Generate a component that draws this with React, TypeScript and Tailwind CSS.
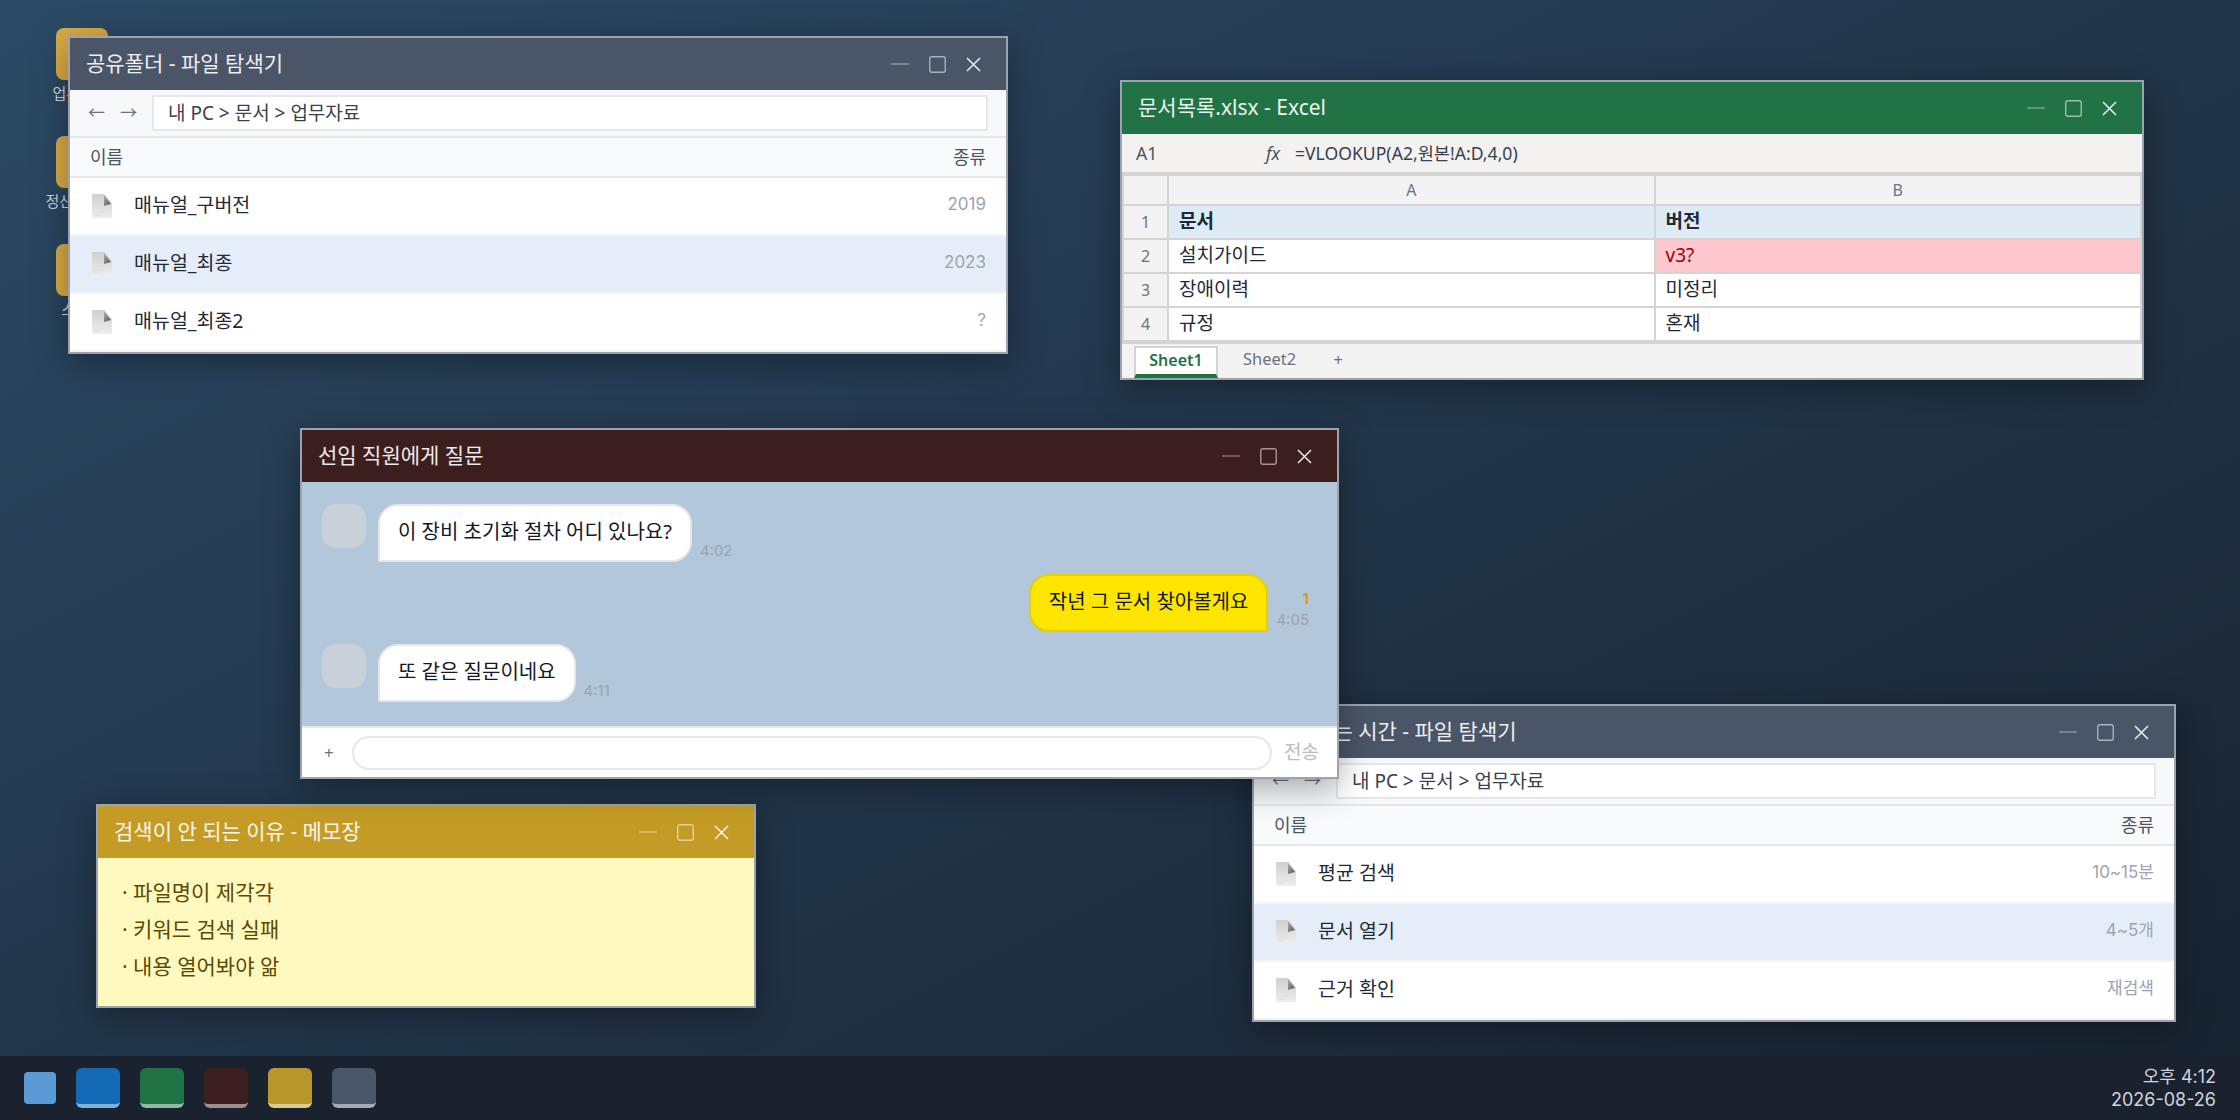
import React from 'react'

const FONT = '[font-family:"Noto_Sans","Noto_Sans_CJK_JP",sans-serif]'
// digits in the list columns, timestamps and clock are proportional
const DIGITS = '[font-family:Inter,"Noto_Sans_CJK_JP",sans-serif]'

// window buttons drawn the same on every title bar
const WinControls = () => (
  <div className="flex items-center gap-[20px] opacity-90">
    <svg width="18" height="18" viewBox="0 0 18 18" fill="none" className="stroke-white/50">
      <path d="M0 9h18" strokeWidth="1.2" />
    </svg>
    <svg width="17" height="17" viewBox="0 0 17 17" fill="none" className="stroke-white/60">
      <rect x="0.75" y="0.75" width="15.5" height="15.5" rx="2" strokeWidth="1.4" />
    </svg>
    <svg width="15" height="15" viewBox="0 0 15 15" fill="none" className="stroke-white">
      <path d="M1 1l13 13M14 1L1 14" strokeWidth="1.5" />
    </svg>
  </div>
)

const TitleBar = ({ title, color }: { title: string; color: string }) => (
  <div className={`h-[52px] shrink-0 flex items-center justify-between pl-[16px] pr-[25px] ${color}`}>
    <span className="text-[21px] text-white/90 whitespace-nowrap">{title}</span>
    <WinControls />
  </div>
)

const FileIcon = () => (
  <svg width="20" height="24" viewBox="0 0 20 24" className="shrink-0">
    <defs>
      <linearGradient id="docBody" x1="0" y1="0" x2="0" y2="1">
        <stop offset="0" stopColor="#cfcfcf" />
        <stop offset="1" stopColor="#eeeeee" />
      </linearGradient>
      <linearGradient id="docFold" x1="0" y1="0" x2="1" y2="1">
        <stop offset="0" stopColor="#b0b0b0" />
        <stop offset="1" stopColor="#555555" />
      </linearGradient>
    </defs>
    <path d="M0 0h12l8 9v15H0z" fill="url(#docBody)" />
    <path d="M12 1l7 9-7 2z" fill="url(#docFold)" />
    <path d="M2 18h10M2 21h6" stroke="#dcdcdc" strokeWidth="1" />
  </svg>
)

type FileRow = { name: string; kind: string; active?: boolean }

const ExplorerWindow = ({ title, rows, place }: { title: string; rows: FileRow[]; place: string }) => (
  <div className={`absolute ${place} border-2 border-[#9ca3af] bg-white flex flex-col shadow-[0_8px_32px_rgba(0,0,0,0.35)]`}>
    <TitleBar title={title} color="bg-[#4a5568]" />
    <div className="h-[48px] bg-[#f7f8fa] border-b-2 border-[#e5e7eb] flex items-center pl-[18px] pr-[18px]">
      <span className="text-[17px] text-[#6b7280] w-[32px]">←</span>
      <span className="text-[17px] text-[#6b7280] w-[32px]">→</span>
      <div className="flex-1 h-[36px] bg-white border-2 border-[#e5e7eb] flex items-center px-[14px] text-[19px] text-[#374151] whitespace-nowrap">
        내 PC &gt; 문서 &gt; 업무자료
      </div>
    </div>
    <div className="h-[40px] bg-[#f9fafb] border-b-2 border-[#e5e7eb] flex items-center justify-between px-[20px] text-[18px] text-[#4b5563]">
      <span>이름</span>
      <span>종류</span>
    </div>
    {rows.map(r => (
      <div
        key={r.name}
        className={`h-[58px] flex items-center justify-between pl-[22px] pr-[20px] border-b-2 border-[#f3f4f6] ${r.active ? 'bg-[#e5eef8]' : 'bg-white'}`}
      >
        <div className="flex items-center gap-[22px]">
          <FileIcon />
          <span className="mb-[2px] text-[19.5px] text-[#1f2937]">{r.name}</span>
        </div>
        <span className={`mb-[2px] text-[17px] text-[#9ca3af] ${DIGITS}`}>{r.kind}</span>
      </div>
    ))}
  </div>
)

const DesktopIcon = ({ label }: { label: string }) => (
  <div className="w-[100px] h-[108px] flex flex-col items-center gap-[2px]">
    <div className="w-[52px] h-[52px] rounded-[8px] bg-[#d9ab45]" />
    <span className="text-[15px] text-[#d1d5db] whitespace-nowrap">{label}</span>
  </div>
)

const Cell = ({ children, className = '' }: { children?: React.ReactNode; className?: string }) => (
  <div className={`flex items-center px-[10px] pb-[2px] text-[19px] text-[#1f2937] ${className}`}>{children}</div>
)

const HeadCell = ({ children }: { children?: React.ReactNode }) => (
  <div className="flex items-center justify-center bg-[#f3f3f3] text-[16px] text-[#6b7280]">{children}</div>
)

const sheetRows = [
  { n: '2', a: '설치가이드', b: 'v3?', bad: true },
  { n: '3', a: '장애이력', b: '미정리' },
  { n: '4', a: '규정', b: '혼재' },
]

const ExcelWindow = () => (
  <div className="absolute left-[1120px] top-[80px] w-[1024px] h-[300px] border-2 border-[#9ca3af] bg-[#f3f3f3] flex flex-col shadow-[0_8px_32px_rgba(0,0,0,0.35)]">
    <TitleBar title="문서목록.xlsx - Excel" color="bg-[#217346]" />
    <div className="h-[38px] shrink-0 bg-[#f3f2f1] flex items-center pl-[14px] text-[17.6px] text-[#374151]">
      <span className="w-[130px] text-[#4b5563]">A1</span>
      <span className="w-[29px] italic text-[#4b5563]">fx</span>
      <span>=VLOOKUP(A2,원본!A:D,4,0)</span>
    </div>
    <div className="bg-[#d4d4d4] px-[2px] py-[4px] grid grid-cols-[43px_1fr_1fr] grid-rows-[28px_32px_32px_32px_32px] gap-[2px]">
      <HeadCell />
      <HeadCell>A</HeadCell>
      <HeadCell>B</HeadCell>
      <HeadCell>1</HeadCell>
      <Cell className="bg-[#deebf6] font-bold">문서</Cell>
      <Cell className="bg-[#deebf6] font-bold">버전</Cell>
      {sheetRows.map(r => (
        <React.Fragment key={r.n}>
          <HeadCell>{r.n}</HeadCell>
          <Cell className="bg-white">{r.a}</Cell>
          <Cell className={r.bad ? 'bg-[#ffc7ce] !text-[#9c0006]' : 'bg-white'}>{r.b}</Cell>
        </React.Fragment>
      ))}
    </div>
    <div className="flex-1 flex items-end pl-[12px] bg-[#f3f3f3]">
      <div className="w-[84px] h-[32px] pb-[2px] bg-white border-x-2 border-t-2 border-[#d4d4d4] border-b-[4px] !border-b-[#217346] flex items-center justify-center text-[16px] font-semibold text-[#217346]">
        Sheet1
      </div>
      <span className="ml-[25px] mb-[6px] text-[16.5px] text-[#6b7280]">Sheet2</span>
      <span className="ml-[37px] mb-[6px] text-[17px] text-[#6b7280]">+</span>
    </div>
  </div>
)

const Bubble = ({ text, mine }: { text: string; mine?: boolean }) => (
  <div
    className={`h-[58px] px-[18px] pb-[2px] flex items-center text-[20px] text-[#111827] border-2 ${
      mine
        ? 'bg-[#fee500] border-[#e6cf00] rounded-[20px] rounded-br-[2px]'
        : 'bg-white border-[#e5e7eb] rounded-[20px] rounded-bl-[2px]'
    }`}
  >
    {text}
  </div>
)

const Avatar = () => <div className="w-[44px] h-[44px] rounded-[14px] bg-[#c8d0da]" />

const ChatWindow = () => (
  <div className="absolute left-[300px] top-[428px] w-[1039px] h-[351px] border-2 border-[#9ca3af] bg-white flex flex-col shadow-[0_8px_32px_rgba(0,0,0,0.35)]">
    <TitleBar title="선임 직원에게 질문" color="bg-[#3c1e1e]" />
    <div className={`flex-1 bg-[#b2c7da] pt-[22px] pl-[20px] pr-[28px] flex flex-col gap-[12px]`}>
      <div className="flex items-end gap-[8px]">
        <div className="self-start mr-[4px]">
          <Avatar />
        </div>
        <Bubble text="이 장비 초기화 절차 어디 있나요?" />
        <span className={`text-[15px] text-[#9ca3af] ${DIGITS}`}>4:02</span>
      </div>
      <div className="flex items-end justify-end gap-[8px]">
        <Bubble text="작년 그 문서 찾아볼게요" mine />
        <div className={`flex flex-col items-end text-[15px] leading-[21px] mb-[2px] ${DIGITS}`}>
          <span className="text-[#d9a000] font-bold">1</span>
          <span className="text-[#9ca3af]">4:05</span>
        </div>
      </div>
      <div className="flex items-end gap-[8px]">
        <div className="self-start mr-[4px]">
          <Avatar />
        </div>
        <Bubble text="또 같은 질문이네요" />
        <span className={`text-[15px] text-[#9ca3af] ${DIGITS}`}>4:11</span>
      </div>
    </div>
    <div className="h-[51px] shrink-0 border-t-2 border-[#e5e7eb] bg-white flex items-center pl-[22px] pr-[18px]">
      <span className="w-[28px] text-[17px] text-[#6b7280]">+</span>
      <div className="flex-1 h-[34px] rounded-full border-2 border-[#e5e7eb]" />
      <span className="ml-[12px] text-[19px] text-[#b8bcc4]">전송</span>
    </div>
  </div>
)

const MemoWindow = () => (
  <div className="absolute left-[96px] top-[804px] w-[660px] h-[204px] border-2 border-[#9ca3af] bg-[#fff9c0] flex flex-col shadow-[0_8px_32px_rgba(0,0,0,0.35)]">
    <TitleBar title="검색이 안 되는 이유 - 메모장" color="bg-[#c49c25]" />
    <div className="pt-[16px] pl-[24px] text-[21px] leading-[37px] text-[#5c4a00]">
      <p>· 파일명이 제각각</p>
      <p>· 키워드 검색 실패</p>
      <p>· 내용 열어봐야 앎</p>
    </div>
  </div>
)

const TaskApp = ({ color, edge }: { color: string; edge: string }) => (
  <div className={`w-[44px] h-[40px] rounded-[6px] border-b-[4px] ${color} ${edge}`} />
)

const Taskbar = () => (
  <div className="absolute left-0 right-0 bottom-0 h-[64px] bg-[#1a2230] flex items-center pl-[24px] pr-[24px]">
    <div className="w-[32px] h-[32px] rounded-[4px] bg-[#5b9bd5] mr-[20px]" />
    <div className="flex gap-[20px]">
      <TaskApp color="bg-[#1469b4]" edge="border-[#7fb0da]" />
      <TaskApp color="bg-[#217346]" edge="border-[#8fb9a3]" />
      <TaskApp color="bg-[#3c1e1e]" edge="border-[#9d8f8f]" />
      <TaskApp color="bg-[#b8962a]" edge="border-[#dcca94]" />
      <TaskApp color="bg-[#4a5568]" edge="border-[#a4aab3]" />
    </div>
    <div className={`ml-auto text-right text-[18px] leading-[23px] text-[#d1d5db] ${DIGITS}`}>
      <div>오후 4:12</div>
      <div>2026-08-26</div>
    </div>
  </div>
)

export default function App() {
  return (
    <div className={`relative w-[2240px] h-[1120px] overflow-hidden bg-gradient-to-br from-[#2c4a66] to-[#18222f] ${FONT}`}>
      {/* folders, mostly behind the first window */}
      <div className="absolute left-[32px] top-[28px] flex flex-col">
        <DesktopIcon label="업무 자료" />
        <DesktopIcon label="정산 자료실" />
        <DesktopIcon label="스캔본" />
      </div>

      <ExplorerWindow
        title="공유폴더 - 파일 탐색기"
        place="left-[68px] top-[36px] w-[940px] h-[318px]"
        rows={[
          { name: '매뉴얼_구버전', kind: '2019' },
          { name: '매뉴얼_최종', kind: '2023', active: true },
          { name: '매뉴얼_최종2', kind: '?' },
        ]}
      />
      <ExcelWindow />
      <ExplorerWindow
        title="문서 찾는 시간 - 파일 탐색기"
        place="left-[1252px] top-[704px] w-[924px] h-[318px]"
        rows={[
          { name: '평균 검색', kind: '10~15분' },
          { name: '문서 열기', kind: '4~5개', active: true },
          { name: '근거 확인', kind: '재검색' },
        ]}
      />
      <MemoWindow />
      <ChatWindow />
      <Taskbar />
    </div>
  )
}
